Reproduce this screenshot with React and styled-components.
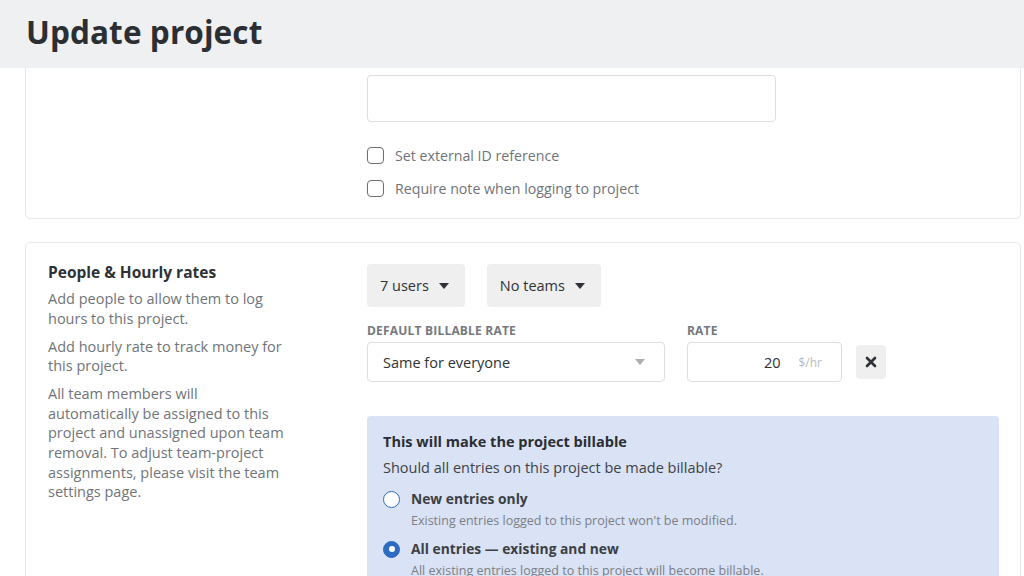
import React from "react";
import styled, { createGlobalStyle } from "styled-components";

const Global = createGlobalStyle`
  html, body {
    margin: 0;
    padding: 0;
    background: #ffffff;
    overflow: hidden;
    font-family: "Open Sans", "Liberation Sans", sans-serif;
    color: #2e3236;
  }
  * { box-sizing: border-box; }
`;

const Header = styled.header`
  position: fixed;
  top: 0;
  left: 0;
  width: 100%;
  height: 68px;
  background: #eff0f2;
  display: flex;
  align-items: center;
  padding: 0 26px 6px;
  z-index: 10;
`;

const Title = styled.h1`
  margin: 0;
  font-size: 31.5px;
  font-weight: 700;
  color: #2b2f33;
  letter-spacing: 0.1px;
`;

const Main = styled.main`
  display: flex;
  flex-direction: column;
  gap: 23px;
  padding: 40px 3px 0 25px;
`;

const Card = styled.section`
  border: 1px solid #e7e8ea;
  border-radius: 5px;
  display: grid;
  grid-template-columns: 240px 1fr;
  column-gap: 79px;
  padding: ${p => p.pad || "19px 20px 20px 22px"};
`;

const Side = styled.div`
  display: flex;
  flex-direction: column;
`;

const SideTitle = styled.h2`
  margin: 0 0 7px;
  font-size: 15.5px;
  font-weight: 700;
  color: #2e3236;
  line-height: 20px;
`;

const SideText = styled.p`
  margin: 0 0 8.4px;
  font-size: 14.5px;
  line-height: 19.6px;
  color: #707479;
`;

const Body = styled.div`
  display: flex;
  flex-direction: column;
  padding-top: ${p => p.pt || "0"};
`;

const TextBox = styled.div`
  width: 409px;
  height: 47px;
  border: 1px solid #dcdee1;
  border-radius: 4px;
  background: #fff;
`;

const CheckList = styled.div`
  display: flex;
  flex-direction: column;
  gap: 14px;
  margin-top: 24px;
`;

const CheckRow = styled.label`
  display: flex;
  align-items: center;
  gap: 11px;
  font-size: 14.2px;
  color: #6f7379;
`;

const Box = styled.span`
  width: 17px;
  height: 17px;
  border: 1.5px solid #6a6e73;
  border-radius: 4px;
  background: #fff;
`;

const Row = styled.div`
  display: flex;
  align-items: flex-start;
  gap: 22px;
  margin-top: ${p => p.mt || "0"};
`;

const DropButton = styled.button`
  height: 43px;
  padding: 0 16px 0 13px;
  border: none;
  border-radius: 4px;
  background: #efefef;
  display: flex;
  align-items: center;
  gap: 10px;
  font-family: inherit;
  font-size: 14.5px;
  color: #2e3236;
`;

const Caret = styled.span`
  width: 0;
  height: 0;
  border-left: ${p => p.size || 5}px solid transparent;
  border-right: ${p => p.size || 5}px solid transparent;
  border-top: ${p => (p.size || 5) + 1}px solid ${p => p.color || "#2e3236"};
`;

const Field = styled.div`
  display: flex;
  flex-direction: column;
  gap: 3px;
  width: ${p => p.width};
  margin-left: ${p => p.ml || "0"};
`;

const Label = styled.span`
  font-size: 12px;
  font-weight: 700;
  letter-spacing: 0.2px;
  color: #75797e;
  text-transform: uppercase;
  line-height: 16px;
`;

const Select = styled.div`
  height: 40px;
  border: 1px solid #dcdee1;
  border-radius: 4px;
  display: flex;
  align-items: center;
  justify-content: space-between;
  padding: 0 19px 0 15px;
  font-size: 14.5px;
  color: #2e3236;
`;

const RateInput = styled.div`
  height: 40px;
  border: 1px solid #dcdee1;
  border-radius: 4px;
  display: flex;
  align-items: center;
  justify-content: flex-end;
  gap: 18px;
  padding: 0 19px 0 15px;
  font-size: 14.5px;
  color: #2e3236;
`;

const Unit = styled.span`
  font-size: 12px;
  color: #b9bcc0;
`;

const IconButton = styled.button`
  width: 30px;
  height: 34px;
  margin-top: 3px;
  border: none;
  border-radius: 4px;
  background: #efefef;
  display: flex;
  align-items: center;
  justify-content: center;
  padding: 0;
`;

const Notice = styled.div`
  margin-top: 34px;
  width: 632px;
  background: #dae2f5;
  border-radius: 4px;
  padding: 16px 16px 20px;
  display: flex;
  flex-direction: column;
`;

const NoticeTitle = styled.h3`
  margin: 0 0 6px;
  font-size: 14.5px;
  font-weight: 700;
  color: #2a2e33;
  line-height: 20px;
`;

const NoticeText = styled.p`
  margin: 0 0 11px;
  font-size: 14.5px;
  line-height: 20px;
  color: #3e4247;
`;

const Option = styled.div`
  display: grid;
  grid-template-columns: 17px 1fr;
  column-gap: 11px;
  row-gap: 3px;
  align-items: center;
  margin-bottom: 10px;
`;

const Radio = styled.span`
  width: 17px;
  height: 17px;
  border-radius: 50%;
  background: ${p => (p.checked ? "#2d6cc0" : "#fff")};
  border: 1.5px solid #2d6cc0;
  display: flex;
  align-items: center;
  justify-content: center;
  &::after {
    content: "";
    width: 6px;
    height: 6px;
    border-radius: 50%;
    background: #fff;
    display: ${p => (p.checked ? "block" : "none")};
  }
`;

const OptionTitle = styled.span`
  font-size: 13.8px;
  font-weight: 700;
  color: #3b3f44;
  line-height: 20px;
`;

const OptionHint = styled.span`
  grid-column: 2;
  font-size: 12.5px;
  line-height: 17px;
  color: #7b7f85;
`;

export default function App() {
  return (
    <>
      <Global />
      <Header>
        <Title>Update project</Title>
      </Header>
      <Main>
        <Card pad="34px 20px 20px 22px">
          <Side />
          <Body>
            <TextBox />
            <CheckList>
              <CheckRow><Box />Set external ID reference</CheckRow>
              <CheckRow><Box />Require note when logging to project</CheckRow>
            </CheckList>
          </Body>
        </Card>
        <Card>
          <Side>
            <SideTitle>People &amp; Hourly rates</SideTitle>
            <SideText>Add people to allow them to log hours to this project.</SideText>
            <SideText>Add hourly rate to track money for this project.</SideText>
            <SideText>
              All team members will automatically be assigned to this project and unassigned upon team
              removal. To adjust team-project assignments, please visit the team settings page.
            </SideText>
          </Side>
          <Body pt="2px">
            <Row>
              <DropButton>7 users <Caret /></DropButton>
              <DropButton>No teams <Caret /></DropButton>
            </Row>
            <Row mt="16px">
              <Field width="298px">
                <Label>Default billable rate</Label>
                <Select>
                  Same for everyone
                  <Caret size={5} color="#a9acb0" />
                </Select>
              </Field>
              <Field width="155px">
                <Label>Rate</Label>
                <RateInput>
                  20 <Unit>$/hr</Unit>
                </RateInput>
              </Field>
              <Field width="30px" ml="-8px">
                <Label>&nbsp;</Label>
                <IconButton>
                  <svg width="12" height="12" viewBox="0 0 12 12">
                    <path d="M2 2 L10 10 M10 2 L2 10" stroke="#2e3236" strokeWidth="2.6" strokeLinecap="round" />
                  </svg>
                </IconButton>
              </Field>
            </Row>
            <Notice>
              <NoticeTitle>This will make the project billable</NoticeTitle>
              <NoticeText>Should all entries on this project be made billable?</NoticeText>
              <Option>
                <Radio />
                <OptionTitle>New entries only</OptionTitle>
                <OptionHint>Existing entries logged to this project won't be modified.</OptionHint>
              </Option>
              <Option>
                <Radio checked />
                <OptionTitle>All entries — existing and new</OptionTitle>
                <OptionHint>All existing entries logged to this project will become billable.</OptionHint>
              </Option>
            </Notice>
          </Body>
        </Card>
      </Main>
    </>
  );
}
